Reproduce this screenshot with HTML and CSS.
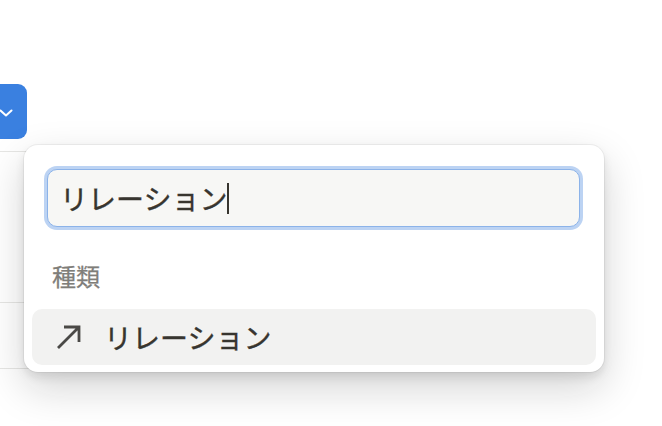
FILE: index.html
```html
<!DOCTYPE html>
<html lang="ja">
<head>
<meta charset="utf-8">
<link rel="stylesheet" href="styles.css">
</head>
<body>
<div class="bg">
  <div class="btn">
    <svg class="chev" width="14" height="10" viewBox="0 0 14 10"><path d="M1.5 2.5 L7 7.5 L12.5 2.5" fill="none" stroke="#fff" stroke-width="2" stroke-linecap="round" stroke-linejoin="round"/></svg>
  </div>
  <div class="rows">
    <div class="row r1"></div>
    <div class="row r2"></div>
  </div>
</div>

<div class="popup">
  <div class="input"><span class="val">リレーション</span><span class="caret"></span></div>
  <div class="label">種類</div>
  <div class="item">
    <svg class="arrow" width="26" height="26" viewBox="0 0 26 26"><path d="M2 24 L23 3 M8 3 H23 V18" fill="none" stroke="#4a4946" stroke-width="2.8"/></svg>
    <span class="itext">リレーション</span>
  </div>
</div>
</body>
</html>
```

FILE: styles.css
```css
html, body {
  margin: 0;
  padding: 0;
  background: #ffffff;
  font-family: "Noto Sans CJK JP", "Noto Sans", sans-serif;
  color: #37352f;
}
body {
  width: 662px;
  height: 426px;
  overflow: hidden;
  position: relative;
}
.bg {
  padding-top: 84px;
  width: 120px;
}
.btn {
  width: 27px;
  height: 55px;
  background: #3a80e0;
  border-radius: 0 9px 9px 0;
  display: flex;
  align-items: center;
}
.chev {
  margin-left: -1px;
  margin-top: 3px;
}
.rows {
  margin-top: 12px;
  border-top: 1px solid #e6e6e4;
}
.row {
  border-bottom: 1px solid #e6e6e4;
}
.r1 { height: 150px; }
.r2 { height: 65px; }

.popup {
  position: absolute;
  left: 24px;
  top: 145px;
  width: 580px;
  height: 227px;
  box-sizing: border-box;
  background: #fff;
  border-radius: 14px;
  padding: 24px 8px 7px 8px;
  box-shadow: rgba(15,15,15,0.05) 0 0 0 1px, rgba(15,15,15,0.1) 0 5px 10px, rgba(15,15,15,0.18) 0 16px 42px;
}
.input {
  margin: 0 16px 0 15px;
  height: 58px;
  box-sizing: border-box;
  border: 1.5px solid #8cb3e9;
  box-shadow: 0 0 0 3px #bcd3f3;
  border-radius: 10px;
  background: #f7f7f5;
  display: flex;
  align-items: center;
  padding-left: 12px;
  font-size: 28px;
  color: #37352f;
  -webkit-text-stroke: 0.35px #37352f;
}
.val {
  line-height: 1;
}
.caret {
  width: 2px;
  height: 31px;
  background: #37352f;
  margin-left: 0;
}
.label {
  padding: 32px 0 17px 20px;
  height: 33px;
  line-height: 33px;
  font-size: 24px;
  color: #7f7e7a;
  -webkit-text-stroke: 0.25px #7f7e7a;
}
.item {
  height: 56px;
  border-radius: 10px;
  background: #f2f2f1;
  display: flex;
  align-items: center;
  padding-left: 24px;
}
.arrow {
  flex: none;
}
.itext {
  margin-left: 22px;
  font-size: 28px;
  color: #37352f;
  -webkit-text-stroke: 0.35px #37352f;
}
```
